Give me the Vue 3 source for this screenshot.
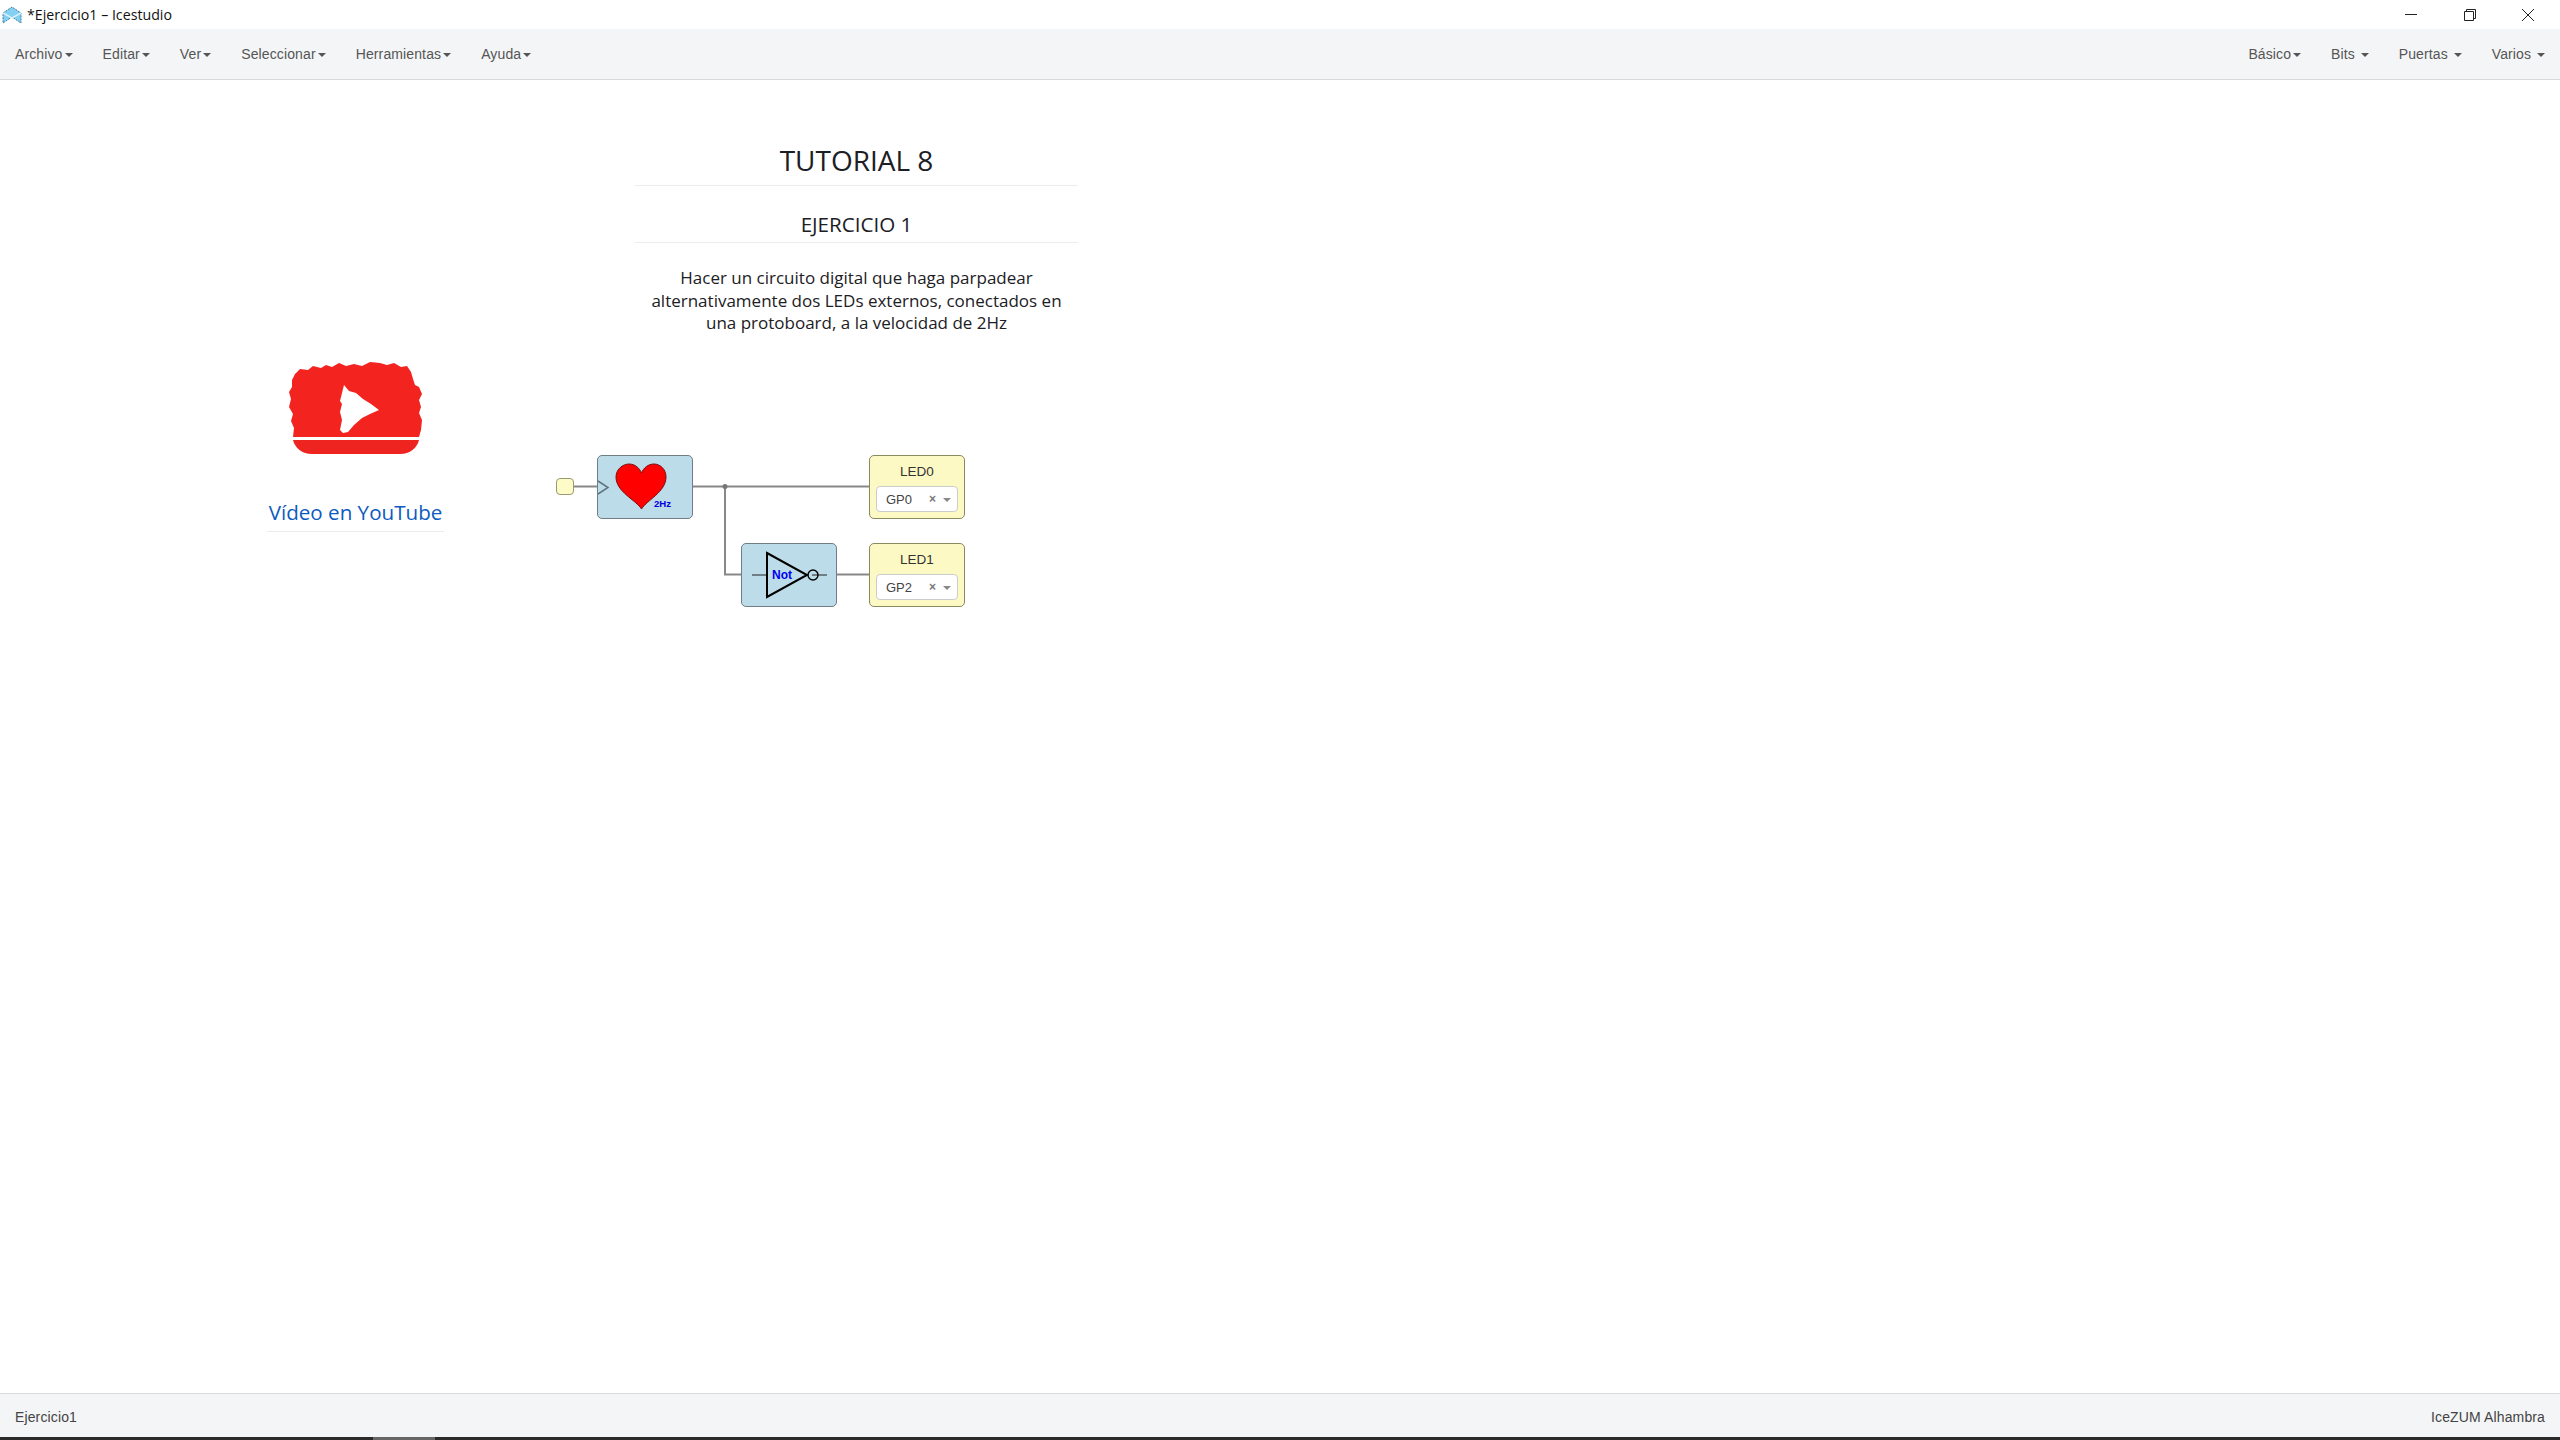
<script setup>
const leftMenus = ['Archivo', 'Editar', 'Ver', 'Seleccionar', 'Herramientas', 'Ayuda'];
const rightMenus = ['Básico', 'Bits', 'Puertas', 'Varios'];
const leds = [
  { name: 'LED0', pin: 'GP0', top: 375 },
  { name: 'LED1', pin: 'GP2', top: 463 },
];
</script>

<template>
  <div class="app">
    <header class="titlebar">
      <div class="title">
        <svg class="logo" width="20" height="20" viewBox="0 0 20 20">
          <path d="M1 8 L10 2 L19 8 L19 18 L10 12 L1 18 Z" fill="#84d0f2" stroke="#3c7f9f" stroke-width="1" stroke-dasharray="2 1" />
          <path d="M1 8 L10 13 L19 8" fill="none" stroke="#d8f0fa" stroke-width="1.5" />
        </svg>
        <span>*Ejercicio1 – Icestudio</span>
      </div>
      <div class="winbtns">
        <svg width="14" height="14" viewBox="0 0 14 14"><path d="M1 6.5 H13" stroke="#222" fill="none" /></svg>
        <svg width="14" height="14" viewBox="0 0 14 14"><path d="M1.5 3.5 H10.5 V12.5 H1.5 Z M3.5 3.5 V1.5 H12.5 V10.5 H10.5" stroke="#222" fill="none" /></svg>
        <svg width="14" height="14" viewBox="0 0 14 14"><path d="M1 1 L13 13 M13 1 L1 13" stroke="#222" fill="none" /></svg>
      </div>
    </header>

    <nav class="menubar">
      <ul class="menu">
        <li v-for="m in leftMenus" :key="m">{{ m }}<i class="caret"></i></li>
      </ul>
      <ul class="menu right">
        <li v-for="m in rightMenus" :key="m">{{ m }}<i class="caret" :class="{ spaced: m !== 'Básico' }"></i></li>
      </ul>
    </nav>

    <main class="canvas">
      <section class="info tutorial">
        <h1>TUTORIAL 8</h1>
        <hr />
        <h2>EJERCICIO 1</h2>
        <hr />
        <p>Hacer un circuito digital que haga parpadear alternativamente dos LEDs externos, conectados en una protoboard, a la velocidad de 2Hz</p>
      </section>

      <section class="info video">
        <svg width="136" height="94" viewBox="0 0 136 94">
          <path d="M7 14 L12 9 L20 10 L25 6 L33 8 L38 5 L44 7 L51 3 L58 6 L66 4 L74 6 L82 2 L92 3 L99 5 L106 3 L113 7 L119 6 L123 12 L125 19 L127 25 L131 27 L134 34 L131 40 L133 47 L131 53 L134 60 L133 70 L131 77 H5 L6 68 L3 61 L5 54 L1 47 L3 39 L1 32 L4 27 L4 20 Z" fill="#f3241f" />
          <path d="M5 80 H131 C129 88 122 94 112 94 H24 C14 94 7 88 5 80 Z" fill="#ee2420" />
          <path d="M56 25 L61 31 L68 33 L75 39 L83 44 L91 50 L82 54 L74 58 L66 65 L60 72 L55 73 L52 70 L54 60 L52 52 L54 44 L52 41 Z" fill="#fff" />
        </svg>
        <a class="ytlink">Vídeo en YouTube</a>
      </section>

      <svg class="wires" width="500" height="200" viewBox="540 400 500 200">
        <path d="M574 486.5 H598 M692 486.5 H869 M725 486.5 V574.5 H741 M837 574.5 H869" fill="none" stroke="#888" stroke-width="2" />
        <circle cx="725" cy="486.5" r="2.5" fill="#777" />
      </svg>

      <div class="port"></div>

      <div class="block heart-block">
        <svg width="95" height="63" viewBox="0 0 95 63">
          <path d="M0 25 L10 31.5 L0 38" fill="none" stroke="#5f7480" stroke-width="1.5" />
          <path d="M43.5 53 C38 44 18 36 18 21 C18 13 25 8 31 8 C37 8 41.5 12 43.5 17 C45.5 12 50 8 56 8 C62 8 68 13 68 21 C68 36 49 44 43.5 53 Z" fill="#ff0000" stroke="#7a1010" stroke-width="1" />
          <text x="56" y="51" class="hz">2Hz</text>
        </svg>
      </div>

      <div class="block not-block">
        <svg width="95" height="63" viewBox="0 0 95 63">
          <path d="M10 31 H25 M70 31 H85" stroke="#222" stroke-width="1.2" fill="none" />
          <path d="M25 9 L65 31 L25 53 Z" fill="none" stroke="#000" stroke-width="2" />
          <circle cx="71" cy="31" r="5" fill="none" stroke="#000" stroke-width="1.4" />
          <text x="30" y="35" class="not">Not</text>
        </svg>
      </div>

      <div v-for="l in leds" :key="l.name" class="block led" :style="{ top: l.top + 'px' }">
        <div class="led-name">{{ l.name }}</div>
        <div class="select">
          <span class="pin">{{ l.pin }}</span>
          <span class="clear">×</span>
          <i class="arrow"></i>
        </div>
      </div>
    </main>

    <footer class="statusbar">
      <span>Ejercicio1</span>
      <span>IceZUM Alhambra</span>
    </footer>
    <div class="taskbar"><div class="task"></div></div>
  </div>
</template>

<style scoped>
.app {
  display: flex;
  flex-direction: column;
  height: 1440px;
  font-family: "Liberation Sans", Arial, sans-serif;
  background: #fff;
  overflow: hidden;
}

.titlebar {
  height: 29px;
  display: flex;
  justify-content: space-between;
  align-items: center;
  background: #fff;
}

.title {
  display: flex;
  align-items: center;
  gap: 5px;
  padding-left: 2px;
  font-family: "Open Sans", "Noto Sans", sans-serif;
  font-size: 14.2px;
  color: #111;
}

.winbtns {
  display: flex;
  gap: 44.5px;
  padding-right: 25px;
}

.menubar {
  height: 51px;
  display: flex;
  justify-content: space-between;
  align-items: center;
  background: #f4f5f7;
  border-bottom: 1px solid #d9d9d9;
  box-sizing: border-box;
}

.menu {
  display: flex;
  list-style: none;
  margin: 0;
  padding: 0;
}

.menu li {
  padding: 0 15px;
  font-size: 14px;
  letter-spacing: 0.12px;
  color: #555;
}

.menu.right li {
  letter-spacing: 0.1px;
}

.caret {
  display: inline-block;
  width: 0;
  height: 0;
  margin-left: 2px;
  vertical-align: middle;
  border-top: 4px solid #555;
  border-left: 4px solid transparent;
  border-right: 4px solid transparent;
}

.caret.spaced {
  margin-left: 6px;
}

.canvas {
  position: relative;
  flex: 1;
  background: #fff;
}

.info {
  position: absolute;
  text-align: center;
  font-family: "Open Sans", "Noto Sans", sans-serif;
  color: #1c2024;
}

.tutorial {
  left: 635px;
  top: 60px;
  width: 443px;
}

.tutorial h1 {
  margin: 0;
  font-size: 28px;
  font-weight: 500;
  line-height: 40px;
}

.tutorial h2 {
  margin: 0;
  font-size: 20.6px;
  font-weight: 500;
  line-height: 28px;
}

.tutorial hr {
  border: 0;
  border-top: 1px solid #eaecef;
  margin: 5px 0 24px;
}

.tutorial h2 + hr {
  margin: 4px 0 24px;
}

.tutorial p {
  margin: 0 auto;
  width: 425px;
  font-size: 17px;
  font-weight: 500;
  line-height: 22.5px;
}

.video {
  left: 267px;
  top: 280px;
  width: 177px;
}

.video svg {
  display: block;
  margin: 0 auto;
}

.ytlink {
  display: block;
  margin-top: 45px;
  padding-bottom: 5px;
  font-size: 20.6px;
  font-weight: 500;
  line-height: 27px;
  color: #0d5bbd;
  border-bottom: 1px solid #eaecef;
}

.wires {
  position: absolute;
  left: 540px;
  top: 320px;
}

.port {
  position: absolute;
  left: 556px;
  top: 398px;
  width: 18px;
  height: 17px;
  box-sizing: border-box;
  background: #fdfbc8;
  border: 1px solid #9a9a70;
  border-radius: 4px;
}

.block {
  position: absolute;
  width: 96px;
  height: 64px;
  box-sizing: border-box;
  border: 1px solid #6f7d85;
  border-radius: 5px;
  background: #bddce9;
}

.block svg {
  position: absolute;
  left: 0;
  top: 0;
}

.heart-block {
  left: 597px;
  top: 375px;
}

.not-block {
  left: 741px;
  top: 463px;
}

.hz {
  font-family: "Liberation Sans", sans-serif;
  font-size: 9.6px;
  font-weight: 700;
  fill: #0000e0;
}

.not {
  font-family: "Liberation Sans", sans-serif;
  font-size: 12px;
  font-weight: 700;
  fill: #0000ee;
}

.led {
  left: 869px;
  background: #fdf9c4;
  border-color: #8a8a60;
}

.led-name {
  text-align: center;
  font-size: 13.5px;
  line-height: 15px;
  margin-top: 8px;
  color: #333;
}

.select {
  display: flex;
  align-items: center;
  height: 26px;
  margin: 7px 6px 0;
  padding: 0 6px 0 9px;
  box-sizing: border-box;
  background: #fff;
  border: 1px solid #ccc;
  border-radius: 4px;
  font-size: 13px;
  color: #444;
}

.pin {
  flex: 1;
}

.clear {
  color: #777;
  margin-right: 7px;
  font-weight: 700;
  font-size: 12px;
}

.arrow {
  width: 0;
  height: 0;
  margin-top: 2px;
  border-top: 4px solid #888;
  border-left: 4px solid transparent;
  border-right: 4px solid transparent;
}

.statusbar {
  height: 44px;
  display: flex;
  justify-content: space-between;
  align-items: center;
  padding: 2px 15px 0;
  background: #f4f5f7;
  border-top: 1px solid #d9d9d9;
  box-sizing: border-box;
  font-size: 14px;
  letter-spacing: 0.13px;
  color: #444;
}

.taskbar {
  height: 3px;
  background: #2b2b2b;
}

.task {
  width: 62px;
  height: 3px;
  margin-left: 373px;
  background: #666;
}
</style>
